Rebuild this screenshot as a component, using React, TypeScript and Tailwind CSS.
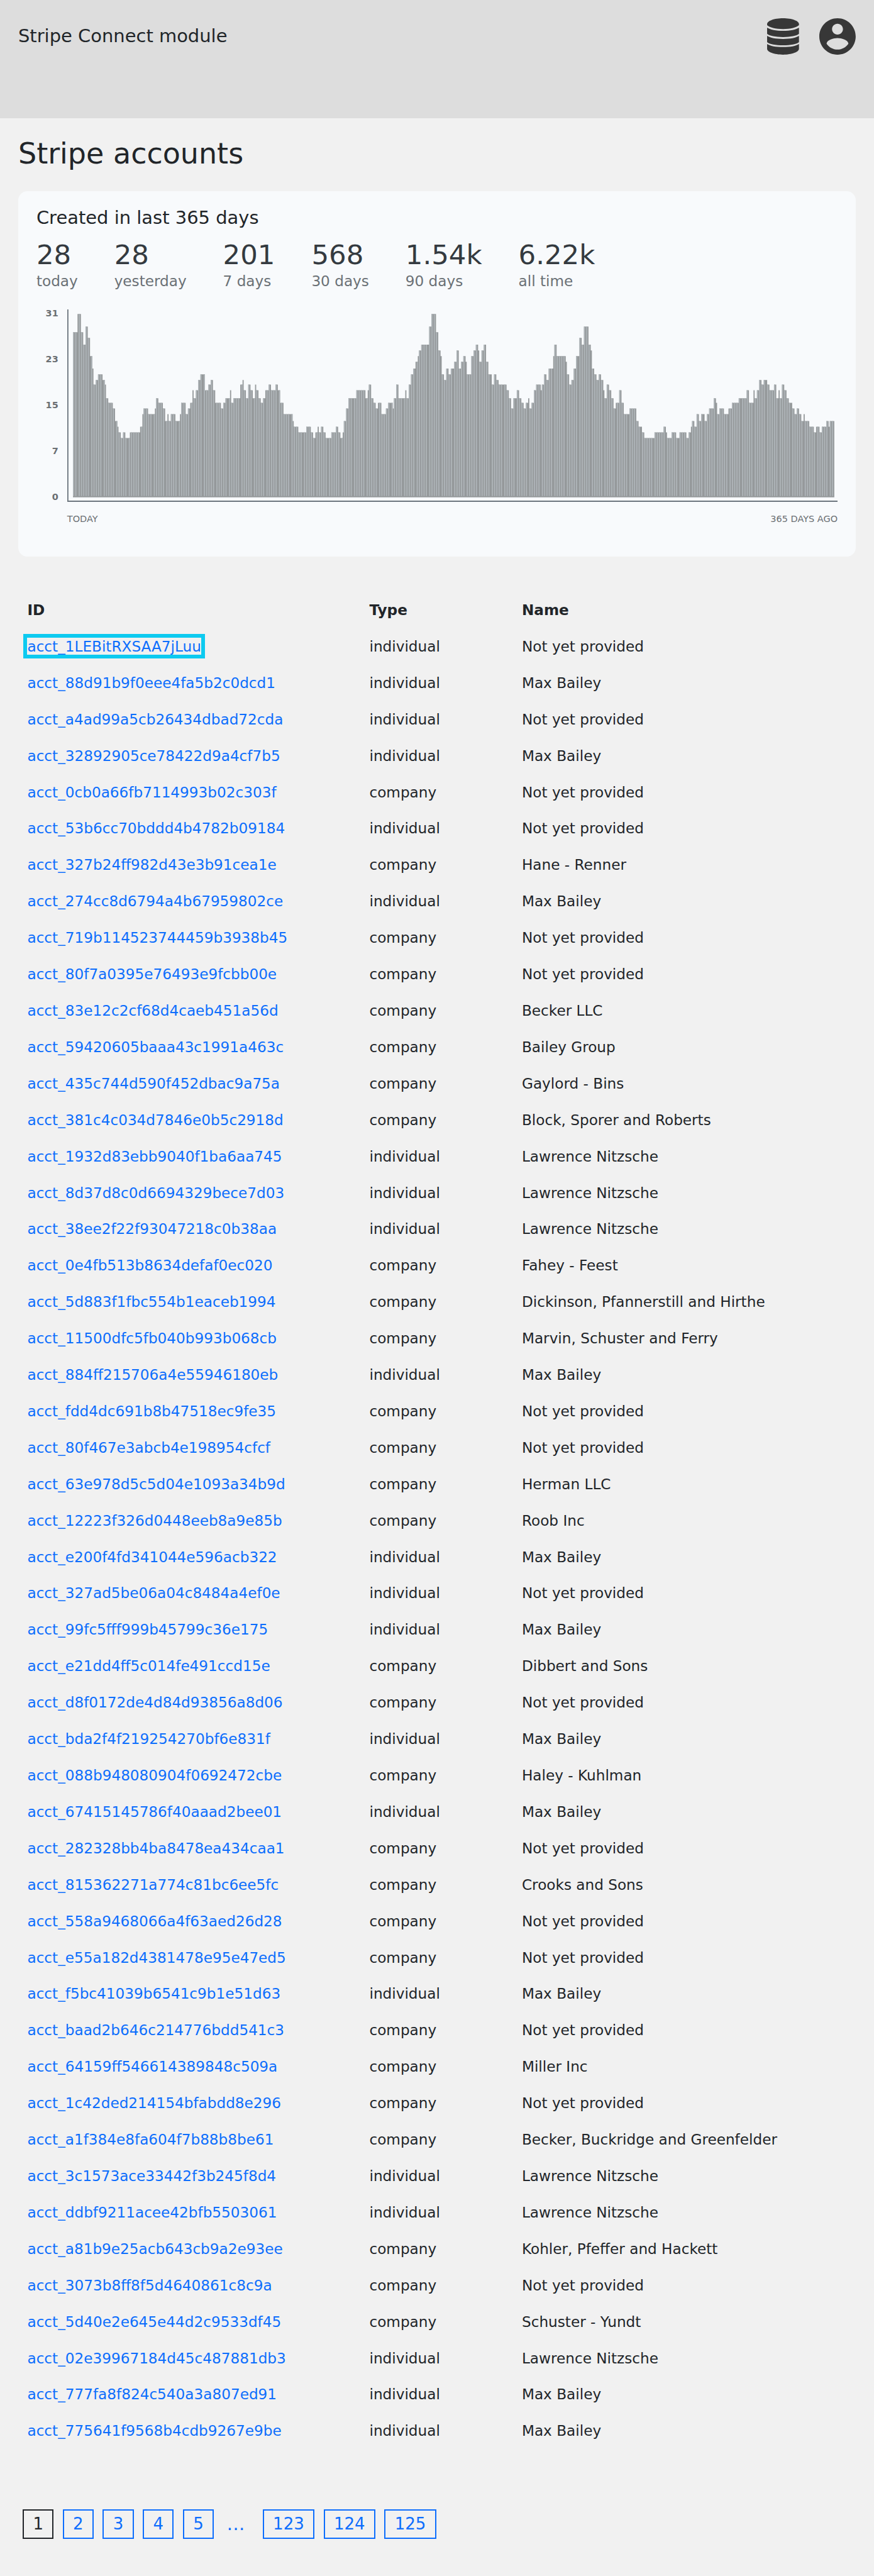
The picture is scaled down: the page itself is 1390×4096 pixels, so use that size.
type Plateau = [number, number];

// Each list holds [end position, accounts per day]; positions are sixths of a chart unit.
const segments: { base: number; runs: Plateau[] }[] = [
  {
    base: -34,
    runs: [
      [228, 28], [246, 31], [258, 28], [270, 26], [282, 29], [294, 27], [306, 24], [312, 22], [324, 19], [336, 20],
      [360, 21], [372, 20], [378, 19], [390, 17], [414, 16], [426, 15], [438, 13], [444, 12], [456, 11], [468, 10],
      [480, 11], [504, 10], [558, 11], [570, 12], [576, 14], [600, 15], [636, 14], [642, 15], [654, 17], [678, 16],
      [690, 15], [702, 13], [708, 14], [720, 13], [744, 14], [768, 13], [774, 14], [798, 16], [810, 14], [822, 15],
      [834, 16], [840, 18], [852, 17], [864, 18], [876, 20], [900, 21], [918, 18], [930, 19], [942, 20], [954, 18],
      [984, 16], [996, 15], [1008, 16], [1032, 17], [1038, 18], [1050, 16],
    ],
  },
  {
    base: 141,
    runs: [
      [36, 17], [48, 19], [54, 20], [66, 18], [78, 17], [90, 19], [102, 18], [114, 17], [120, 19], [132, 18],
      [144, 17], [156, 16], [168, 17], [186, 18], [198, 19], [222, 18], [234, 19], [246, 18], [264, 16], [312, 14],
      [318, 13], [342, 12], [384, 11], [408, 12], [420, 11], [432, 10], [444, 11], [450, 12], [462, 11], [474, 12],
      [486, 11], [516, 10], [540, 11], [552, 12], [564, 11], [576, 10], [582, 11], [594, 13], [606, 15], [648, 17],
      [696, 18], [708, 17], [714, 18], [726, 19], [738, 17], [750, 16], [762, 15], [780, 16], [804, 14], [816, 15],
      [840, 16], [846, 15], [858, 17], [870, 19], [906, 17], [912, 18], [924, 17], [936, 19], [948, 21], [960, 22],
      [972, 23], [978, 24], [990, 25], [1032, 26], [1044, 29], [1050, 31],
    ],
  },
  {
    base: 316,
    runs: [
      [18, 31], [30, 28], [42, 25], [48, 24], [60, 21], [72, 20], [84, 22], [96, 21], [114, 22], [126, 23],
      [138, 25], [150, 22], [162, 23], [174, 24], [180, 23], [204, 21], [216, 24], [228, 25], [240, 26], [246, 25],
      [258, 23], [270, 25], [282, 26], [294, 23], [312, 21], [324, 19], [336, 21], [348, 20], [390, 19], [402, 18],
      [414, 17], [426, 15], [444, 17], [456, 18], [468, 17], [480, 16], [492, 15], [504, 16], [510, 17], [522, 15],
      [534, 16], [546, 18], [570, 19], [576, 18], [588, 19], [600, 21], [612, 20], [636, 22], [642, 24], [654, 26],
      [702, 24], [708, 23], [720, 21], [732, 19], [744, 20], [756, 22], [774, 24], [786, 27], [798, 26], [822, 29],
      [834, 26], [840, 25], [852, 22], [864, 21], [876, 20], [888, 21], [900, 20], [906, 18], [918, 17], [930, 19],
      [942, 18], [954, 17], [966, 15], [984, 16], [996, 18], [1008, 16], [1038, 14], [1050, 15],
    ],
  },
  {
    base: 491,
    runs: [
      [24, 15], [36, 13], [54, 12], [66, 11], [120, 10], [168, 11], [180, 12], [186, 11], [210, 10], [234, 11],
      [252, 10], [288, 11], [300, 10], [312, 11], [318, 12], [330, 13], [342, 12], [354, 14], [366, 13], [384, 14],
      [396, 13], [408, 14], [432, 15], [444, 17], [450, 16], [462, 14], [486, 15], [510, 14], [528, 15], [564, 16],
      [606, 17], [618, 18], [642, 16], [648, 18], [660, 17], [672, 18], [684, 20], [696, 19], [714, 20], [726, 19],
      [750, 18], [762, 19], [774, 17], [780, 18], [792, 17], [804, 19], [816, 18], [828, 17], [846, 16], [858, 15],
      [870, 14], [882, 15], [894, 14], [906, 13], [912, 14], [936, 13], [960, 12], [972, 11], [990, 12], [1002, 11],
      [1026, 12], [1038, 13], [1044, 12], [1068, 13],
    ],
  },
];

const DAYS = 365;
const BARS_WIDTH = 669;
const MAX = 31;

const plateaus = segments.flatMap(({ base, runs }) => runs.map(([end, value]) => ({ end: base + end / 6, value })));

const barHeight = (value: number) => Math.round(Math.floor((value * 100) / MAX) * 1.6) + 1;

// The plot's origin sits 5 units right of the axis and 165 units below its top.
const LEFT = 5;
const BOTTOM = 165;

const silhouette = (() => {
  let d = `M${LEFT} ${BOTTOM}`;
  for (const p of plateaus) d += `V${BOTTOM - barHeight(p.value)}H${LEFT + p.end}`;
  return `${d}V${BOTTOM}Z`;
})();

const stripes = (() => {
  let d = "";
  for (let i = 0; i < DAYS; i++) {
    const x = Math.round((i * BARS_WIDTH) / DAYS);
    const next = Math.round(((i + 1) * BARS_WIDTH) / DAYS);
    if (next - x < 2) continue;
    const value = plateaus.find((p) => p.end > x)?.value ?? 0;
    d += `M${LEFT + x} ${BOTTOM - 1}V${BOTTOM - barHeight(value)}h1V${BOTTOM - 1}Z`;
  }
  return d;
})();

const stats = [
  ["28", "today"],
  ["28", "yesterday"],
  ["201", "7 days"],
  ["568", "30 days"],
  ["1.54k", "90 days"],
  ["6.22k", "all time"],
];

const NP = "Not yet provided";
const MB = "Max Bailey";
const LN = "Lawrence Nitzsche";

const accounts: [string, "i" | "c", string][] = [
  ["1LEBitRXSAA7jLuu", "i", NP],
  ["88d91b9f0eee4fa5b2c0dcd1", "i", MB],
  ["a4ad99a5cb26434dbad72cda", "i", NP],
  ["32892905ce78422d9a4cf7b5", "i", MB],
  ["0cb0a66fb7114993b02c303f", "c", NP],
  ["53b6cc70bddd4b4782b09184", "i", NP],
  ["327b24ff982d43e3b91cea1e", "c", "Hane - Renner"],
  ["274cc8d6794a4b67959802ce", "i", MB],
  ["719b114523744459b3938b45", "c", NP],
  ["80f7a0395e76493e9fcbb00e", "c", NP],
  ["83e12c2cf68d4caeb451a56d", "c", "Becker LLC"],
  ["59420605baaa43c1991a463c", "c", "Bailey Group"],
  ["435c744d590f452dbac9a75a", "c", "Gaylord - Bins"],
  ["381c4c034d7846e0b5c2918d", "c", "Block, Sporer and Roberts"],
  ["1932d83ebb9040f1ba6aa745", "i", LN],
  ["8d37d8c0d6694329bece7d03", "i", LN],
  ["38ee2f22f93047218c0b38aa", "i", LN],
  ["0e4fb513b8634defaf0ec020", "c", "Fahey - Feest"],
  ["5d883f1fbc554b1eaceb1994", "c", "Dickinson, Pfannerstill and Hirthe"],
  ["11500dfc5fb040b993b068cb", "c", "Marvin, Schuster and Ferry"],
  ["884ff215706a4e55946180eb", "i", MB],
  ["fdd4dc691b8b47518ec9fe35", "c", NP],
  ["80f467e3abcb4e198954cfcf", "c", NP],
  ["63e978d5c5d04e1093a34b9d", "c", "Herman LLC"],
  ["12223f326d0448eeb8a9e85b", "c", "Roob Inc"],
  ["e200f4fd341044e596acb322", "i", MB],
  ["327ad5be06a04c8484a4ef0e", "i", NP],
  ["99fc5fff999b45799c36e175", "i", MB],
  ["e21dd4ff5c014fe491ccd15e", "c", "Dibbert and Sons"],
  ["d8f0172de4d84d93856a8d06", "c", NP],
  ["bda2f4f219254270bf6e831f", "i", MB],
  ["088b948080904f0692472cbe", "c", "Haley - Kuhlman"],
  ["67415145786f40aaad2bee01", "i", MB],
  ["282328bb4ba8478ea434caa1", "c", NP],
  ["815362271a774c81bc6ee5fc", "c", "Crooks and Sons"],
  ["558a9468066a4f63aed26d28", "c", NP],
  ["e55a182d4381478e95e47ed5", "c", NP],
  ["f5bc41039b6541c9b1e51d63", "i", MB],
  ["baad2b646c214776bdd541c3", "c", NP],
  ["64159ff546614389848c509a", "c", "Miller Inc"],
  ["1c42ded214154bfabdd8e296", "c", NP],
  ["a1f384e8fa604f7b88b8be61", "c", "Becker, Buckridge and Greenfelder"],
  ["3c1573ace33442f3b245f8d4", "i", LN],
  ["ddbf9211acee42bfb5503061", "i", LN],
  ["a81b9e25acb643cb9a2e93ee", "c", "Kohler, Pfeffer and Hackett"],
  ["3073b8ff8f5d4640861c8c9a", "c", NP],
  ["5d40e2e645e44d2c9533df45", "c", "Schuster - Yundt"],
  ["02e39967184d45c487881db3", "i", LN],
  ["777fa8f824c540a3a807ed91", "i", MB],
  ["775641f9568b4cdb9267e9be", "i", MB],
];

function DatabaseIcon() {
  return (
    <svg viewBox="0 0 56 64" className="h-[57.9px] w-[50.7px]" fill="#373737" aria-hidden="true">
      <path d="M28 0C43.5 0 56 4.6 56 10.3V12.2C52 16.400 41 19 28 19S4 16.400 0 12.200V10.300C0 4.600 12.500 0 28 0Z" />
      <path d="M0 16.500C5 20 15.500 22 28 22S51 20 56 16.500V27.500C52 31 41 33.200 28 33.200S4 31 0 27.500Z" />
      <path d="M0 31C5 34.500 15.500 36.400 28 36.400S51 34.500 56 31V41.900C52 45.400 41 47.600 28 47.600S4 45.400 0 41.900Z" />
      <path d="M0 45.300C5 48.800 15.500 50.700 28 50.700S51 48.800 56 45.300V53.700C56 59.400 43.500 64 28 64S0 59.400 0 53.700Z" />
    </svg>
  );
}

function AccountIcon() {
  return (
    <svg viewBox="2 2 20 20" className="size-[57.9px]" fill="#373737" aria-hidden="true">
      <path d="M12 2C6.480 2 2 6.480 2 12s4.480 10 10 10 10-4.480 10-10S17.520 2 12 2zm0 3c1.660 0 3 1.340 3 3s-1.340 3-3 3-3-1.340-3-3 1.340-3 3-3zm0 14.200c-2.500 0-4.710-1.280-6-3.220.03-1.990 4-3.080 6-3.080 1.990 0 5.970 1.090 6 3.080-1.290 1.940-3.500 3.220-6 3.220z" />
    </svg>
  );
}

function Chart() {
  return (
    <div className="mt-[28.3px]">
      <div className="flex">
        <div className="flex h-[309.5px] w-[34.8px] flex-col justify-between text-right text-[14.48px] leading-[18.1px] font-bold text-[#6b6f73]">
          {[31, 23, 15, 7, 0].map((n) => (
            <span key={n}>{n}</span>
          ))}
        </div>
        <svg viewBox="0 0 677 169" className="mt-[3.2px] ml-[14.1px] h-[305.9px] w-[1225.3px]" preserveAspectRatio="none">
          <path d={silhouette} fill="#95999b" />
          <path d={stripes} fill="#afb5b9" />
          <path d="M0 0H1V168H677V169H0Z" fill="#6c757d" />
        </svg>
      </div>
      <div className="mt-[15px] ml-[48.9px] flex justify-between text-[14.48px] leading-[22px] text-[#6b6f73]">
        <span>TODAY</span>
        <span>365 DAYS AGO</span>
      </div>
    </div>
  );
}

function PageLink({ n, current }: { n: number; current?: boolean }) {
  return (
    <a
      className={
        current
          ? "flex h-[47px] items-center border-2 border-[#212529] px-[14.3px] text-[#212529]"
          : "flex h-[47px] items-center border-2 border-[#0d6efd] px-[14.3px] text-[#0d6efd]"
      }
    >
      {n}
    </a>
  );
}

const grid = "grid h-[57.917px] grid-cols-[544px_242.500px_1fr] items-center pl-[14.500px]";

export default function App() {
  return (
    <div className="h-[4096px] w-[1390px] overflow-hidden bg-[#f1f1f1] font-['DejaVu_Sans',sans-serif] text-[#212529]">
      <header className="h-[188.2px] bg-[#ddd] px-[28.96px] pt-[28.96px]">
        <div className="flex h-[57.9px] items-center justify-between">
          <span className="text-[28.96px] leading-[43.4px]">Stripe Connect module</span>
          <div className="flex gap-[32.6px]">
            <DatabaseIcon />
            <AccountIcon />
          </div>
        </div>
      </header>
      <main className="px-[28.96px]">
        <h1 className="h-[115.86px] pt-[28.9px] text-[45.99px] leading-[55.2px]">Stripe accounts</h1>
        <section className="h-[581px] rounded-[14.5px] bg-[#f8fafc] px-[28.96px] pt-[20.7px]">
          <h2 className="text-[28.96px] leading-[43.4px]">Created in last 365 days</h2>
          <div className="mt-[10.6px] flex gap-[57.9px]">
            {stats.map(([value, label]) => (
              <div key={label}>
                <div className="text-[43.44px] leading-[52.1px] text-[#343a40]">{value}</div>
                <div className="mt-[2.3px] text-[23.17px] leading-[27.8px] text-[#6b7176]">{label}</div>
              </div>
            ))}
          </div>
          <Chart />
        </section>
        <div className="mt-[56.4px] text-[23.17px] leading-[34.75px]">
          <div className={`${grid} font-bold`}>
            <span>ID</span>
            <span>Type</span>
            <span>Name</span>
          </div>
          {accounts.map(([id, type, name], i) => (
            <div key={id} className={grid}>
              <span>
                <a
                  className={
                    i === 0 ? "text-[#0d6efd] outline-[6px] outline-[#0dcaf0] outline-solid" : "text-[#0d6efd]"
                  }
                >
                  acct_{id}
                </a>
              </span>
              <span>{type === "i" ? "individual" : "company"}</span>
              <span>{name}</span>
            </div>
          ))}
        </div>
        <nav className="mt-[95.7px] ml-[7.2px] flex items-center gap-[14.5px] text-[26.06px]">
          <PageLink n={1} current />
          <PageLink n={2} />
          <PageLink n={3} />
          <PageLink n={4} />
          <PageLink n={5} />
          <span className="w-[48.8px] pl-[6px] text-[28.96px] leading-[39px] text-[#0d6efd]">…</span>
          <PageLink n={123} />
          <PageLink n={124} />
          <PageLink n={125} />
        </nav>
      </main>
    </div>
  );
}
